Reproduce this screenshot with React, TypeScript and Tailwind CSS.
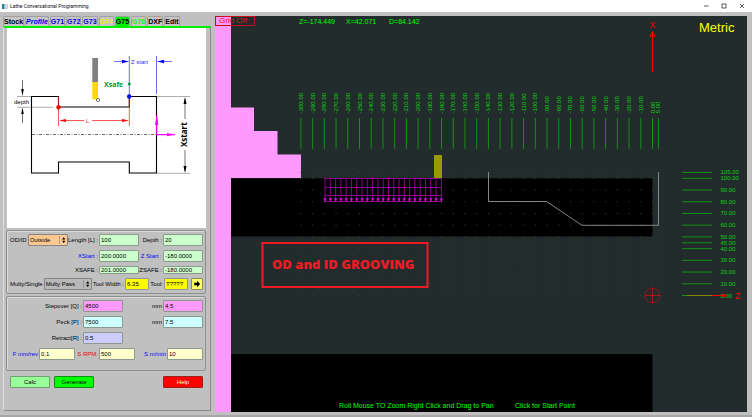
import React from 'react';
import { clsx } from 'clsx';

const TABS = [
  { name: 'Stock', color: 'text-black' },
  { name: 'Profile', color: 'text-[#0000f0] italic' },
  { name: 'G71', color: 'text-[#0000f0]' },
  { name: 'G72', color: 'text-[#0000f0]' },
  { name: 'G73', color: 'text-[#0000f0]' },
  { name: 'G74', color: 'text-[#f5f500]' },
  { name: 'G75', color: 'text-black' },
  { name: 'G76', color: 'text-[#20f020]' },
  { name: 'DXF', color: 'text-black' },
  { name: 'Edit', color: 'text-black' },
];

// --- PLOT SCALE ---
const ORIGIN_Z = 437.5;
const ORIGIN_X = 279.5;
const SCALE = 1.172;
const pz = (z: number) => ORIGIN_Z + z * SCALE;
const px = (x: number) => ORIGIN_X - x * SCALE;

const Z_TICKS = [...Array.from({ length: 31 }, (_, i) => -300 + i * 10), 5];
const X_TICKS = [105, 100, 90, 80, 70, 60, 50, 45, 40, 30, 20, 10, 0];
const PASSES = Array.from({ length: 23 }, (_, i) => 110 + i * 5.29);

interface FieldProps {
  id: string;
  label: string;
  value: string;
  color: string;
  width?: string;
  labelColor?: string;
  thin?: boolean;
}

const Field: React.FC<FieldProps> = ({ id, label, value, color, width = 'w-10', labelColor = 'text-black', thin }) => (
  <div className="flex items-center justify-end gap-px">
    <label htmlFor={id} className={clsx('whitespace-nowrap', labelColor)}>{label}</label>
    <input
      id={id}
      defaultValue={value}
      className={clsx('rounded-[1px] border border-[#8c998c] pl-px text-black outline-none', width, color, thin ? 'h-2' : 'h-3')}
    />
  </div>
);

interface PickerProps {
  id: string;
  label: string;
  options: string[];
  color: string;
  width: string;
}

const Picker: React.FC<PickerProps> = ({ id, label, options, color, width }) => (
  <div className="flex items-center gap-px">
    <label htmlFor={id} className="whitespace-nowrap">{label}</label>
    <div className={clsx('relative h-3', width)}>
      <select id={id} className={clsx('block h-3 w-full appearance-none rounded-[1px] border border-[#858585] pl-px outline-none', color)}>
        {options.map(o => <option key={o}>{o}</option>)}
      </select>
      <svg viewBox="0 0 9 12" className="pointer-events-none absolute top-0 right-0 h-3 w-[9px]">
        <path d="M0.5 2V10" stroke="#888" strokeWidth="0.7" />
        <path d="M3 5.4L4.7 3.2L6.4 5.4ZM3 6.8L4.7 9L6.4 6.8Z" fill="#000" />
      </svg>
    </div>
  </div>
);

const Frame: React.FC<{ className?: string; children: React.ReactNode }> = ({ className, children }) => (
  <div className={clsx('mr-1 ml-[2px] flex flex-col gap-1 rounded-[2px] border border-[#8e8e8e] pt-[3px] pr-[2px] pl-[3px] shadow-[inset_1px_1px_0_#dadada]', className)}>
    {children}
  </div>
);

const PartDiagram = () => (
  <svg viewBox="7 28 199 200" className="mr-1 ml-[3px] block bg-white font-['Liberation_Sans',Arial,sans-serif] text-[6px]">
    {/* dimension lines */}
    <g stroke="#999" strokeWidth="0.8">
      <path d="M17 96.5H31M17 107.3H53M157 96.5H190M157 173.3H190" />
    </g>
    <g stroke="#333" strokeWidth="0.7">
      <path d="M22.5 80V92M22.5 111V123M185 99V119M185 150V171" />
    </g>
    <path d="M22.5 96L21.2 89H23.8ZM22.5 107.5L21.2 114H23.8ZM185 97L183.5 104H186.5ZM185 173L183.5 166H186.5Z" />
    <path d="M32 134.5H156" stroke="#444" strokeWidth="0.8" strokeDasharray="3 1.5 1 1.5" />

    {/* workpiece */}
    <path d="M31.5 96.5H58.5V107H129.3V96.5H156.5V173H129.3V162H58.5V173H31.5Z" fill="none" stroke="#000" strokeWidth="1.1" />

    {/* length */}
    <g stroke="#ff1010" strokeWidth="0.7" fill="none">
      <path d="M58.5 97V126M129.3 97V126M62 120.5H84M92 120.5H126" />
    </g>
    <path d="M59 120.5L66 119V122ZM129 120.5L122 119V122Z" fill="#ff0000" />
    <text x="86" y="122.6" fill="#ff2020">L</text>

    {/* tool */}
    <rect x="92.3" y="58" width="5.7" height="24" fill="#808080" />
    <path d="M92.3 82H98V98L96 99.5H92.3Z" fill="#ffd800" />
    <circle cx="98" cy="100" r="1.6" fill="#fff" stroke="#333" strokeWidth="0.7" />

    {/* z start */}
    <path d="M129.3 56V96M156.5 56V94M114 61.5H125M160 61.5H172" stroke="#3030ff" strokeWidth="0.7" />
    <path d="M129 61.5L122 59.8V63.2ZM157 61.5L164 59.8V63.2Z" fill="#0000ff" />
    <text x="131" y="63.8" fill="#3030ff">Z start</text>
    <text x="104" y="87" fill="#009a30" className="font-['Open_Sans',sans-serif] text-[7px] font-bold">Xsafe</text>
    <path d="M127.6 84L129.3 82L131 84L129.3 86Z" fill="#009a30" />
    <circle cx="129.2" cy="96.5" r="2.2" fill="#0000ff" />
    <circle cx="58.5" cy="107.2" r="2.2" fill="#ff0000" />

    {/* axes */}
    <path d="M156.7 134.6V116M156.7 134.6H175" stroke="#ff00ff" strokeWidth="1.2" />
    <path d="M156.7 115L155 125H158.4ZM175.5 134.6L167 133V136.2Z" fill="#ff00ff" />

    <text x="14" y="103.5">depth</text>
    <text transform="translate(187 147) rotate(-90)" className="font-['Open_Sans',sans-serif] text-[8px] font-bold">Xstart</text>
  </svg>
);

const ToolpathPlot = () => (
  <svg viewBox="0 0 532 396" className="block w-full bg-[#222c2c] font-['Liberation_Sans',Arial,sans-serif]">
    {/* chuck and stock */}
    <path d="M0 0H16V91.5H39V115H62.5V138.5H86V162.3H16V396H0Z" fill="#ff99ff" />
    <path d="M16 162.3H437.5V220.5H16ZM16 338H437.5V396H16Z" fill="#000" />

    {/* grid */}
    <g fill="#1a5a1a">
      {X_TICKS.map(x => Z_TICKS.map(z => (
        <rect key={`${x}:${z}`} x={pz(z) - 0.5} y={px(x) - 0.5} width="1" height="1" />
      )))}
    </g>
    <g stroke="#149214" strokeWidth="1">
      {Z_TICKS.map(z => <path key={z} d={`M${pz(z)} 102V132.7`} />)}
      {X_TICKS.map(x => <path key={x} d={`M467 ${px(x)}H497`} />)}
    </g>
    <g fill="#10d010" className="text-[6px]">
      {Z_TICKS.map(z => (
        <text key={z} transform={`translate(${pz(z) + 2} 97.3) rotate(-90)`}>{z.toFixed(2)}</text>
      ))}
      {X_TICKS.map(x => <text key={x} x="505.5" y={px(x) + 2}>{x.toFixed(2)}</text>)}
    </g>

    {/* tool and groove passes */}
    <rect x="219" y="139" width="8" height="23.3" fill="#999900" />
    <g stroke="#980098" strokeWidth="0.9" fill="none">
      <path d="M109.5 162.5H227M109.5 171.5H227M109.5 179.5H227M109.5 185.5H227" />
      {PASSES.map(x => <path key={x} d={`M${x} 162V186`} />)}
    </g>
    <g fill="#e000e0">
      {PASSES.map(x => <path key={x} d={`M${x} 186L${x - 1.6} 182.3H${x + 1.6}Z`} />)}
    </g>

    {/* profile */}
    <path d="M273.5 156V185.5H331.5L367 209.3H443.5V156" fill="none" stroke="#858585" strokeWidth="1" />

    {/* axes */}
    <g stroke="#ff0000" fill="none">
      <path d="M437.5 56V16M435 21L437.5 15.5L440 21" />
      <path d="M472 279.5H497" stroke="#858500" />
      <path d="M497 279.5H511" />
      <circle cx="437.5" cy="279.5" r="7.5" stroke="#b01010" strokeWidth="0.8" />
      <path d="M430 279.5H445M437.5 272V287" stroke="#d01010" strokeWidth="0.8" />
    </g>
    <path d="M512.5 279.5L507.5 277.5V281.5Z" fill="#ff0000" />
    <g fill="#f00000" className="text-[9px]">
      <text x="434.5" y="11.5">X</text>
      <text x="520" y="282.8">Z</text>
    </g>

    <g fill="#00ff00" className="text-[7px]">
      <text x="84" y="7.5">Z=-174.449</text>
      <text x="131" y="7.5">X=42.071</text>
      <text x="174" y="7.5">D=84.142</text>
      <text x="124" y="391.5">Roll Mouse TO Zoom Right Click and Drag to Pan</text>
      <text x="300" y="391.5">Click for Start Point</text>
    </g>
    <text x="484" y="16" fill="#ffff00" className="text-[13px]">Metric</text>

    <rect x="47.5" y="227" width="165" height="44" fill="none" stroke="#ed1c24" strokeWidth="2" />
    <text x="57" y="253" fill="#ed1c24" className="font-['Open_Sans',sans-serif] text-[13px] font-extrabold">OD and ID GROOVING</text>
  </svg>
);

export default function App() {
  return (
    <div className="flex min-h-screen flex-col bg-[#c0c0c0] font-['Liberation_Sans',Arial,sans-serif] text-[6px] leading-[8px] text-black">
      <header className="flex h-3 items-center bg-white pr-[6px] pl-[2px]">
        <svg viewBox="0 0 6 5" className="mr-[2px] h-[5px] w-[6px]">
          <path d="M0 0H2.5V5H0Z" fill="#2b7f92" />
          <path d="M3 0.5H5.5V4.5H3Z" fill="#dce8f0" stroke="#9ab" strokeWidth="0.5" />
        </svg>
        <h1 className="font-[Roboto,sans-serif] text-[5px] text-[#111]">Lathe Conversational Programming</h1>
        <div className="ml-auto flex gap-[10px]">
          <button aria-label="Minimize" className="h-2 w-2">
            <svg viewBox="0 0 8 8"><path d="M2 4H6.5" stroke="#333" strokeWidth="0.8" /></svg>
          </button>
          <button aria-label="Maximize" className="h-2 w-2">
            <svg viewBox="0 0 8 8"><path d="M2 2H6V6H2Z" fill="none" stroke="#333" strokeWidth="0.8" /></svg>
          </button>
          <button aria-label="Close" className="h-2 w-2">
            <svg viewBox="0 0 8 8"><path d="M2 2L6 6M6 2L2 6" stroke="#333" strokeWidth="0.8" /></svg>
          </button>
        </div>
      </header>

      <main className="flex flex-1 items-stretch gap-1 pt-1 pr-[5px] pb-[3px] pl-[3px]">
        <aside className="flex w-52 shrink-0 flex-col">
          <nav className="flex h-[10px] gap-px">
            {TABS.map(tab => (
              <button
                key={tab.name}
                className={clsx(
                  'rounded-t-[2px] border-t border-r border-l border-[#a0a0a0] text-[7px] font-bold',
                  tab.color,
                  tab.name === 'G75' ? 'bg-[#00ee00]' : 'bg-[#c6c6c6]',
                )}
              >
                {tab.name}
              </button>
            ))}
          </nav>

          <div className="mb-px flex flex-1 flex-col border-t-2 border-r border-b border-l border-t-[#00f000] border-r-[#8a8a8a] border-b-[#8a8a8a] border-l-[#dedede]">
            <PartDiagram />

            <Frame className="mt-[2px] pb-[3px]">
              <div className="grid grid-cols-[1fr_64px]">
                <div className="flex justify-between">
                  <Picker id="side" label="OD/ID" options={['Outside', 'Inside']} color="bg-[#ffc890]" width="w-10" />
                  <Field id="length" label="Length [L] :" value="100" color="bg-[#ccffcc]" />
                </div>
                <Field id="depth" label="Depth :" value="20" color="bg-[#ccffcc]" />
              </div>
              <div className="grid grid-cols-[1fr_64px]">
                <Field id="xstart" label="XStart :" value="200.0000" color="bg-[#ccffcc]" labelColor="text-[#0000f0]" />
                <Field id="zstart" label="Z Start :" value="-180.0000" color="bg-[#ccffcc]" labelColor="text-[#0000f0]" />
              </div>
              <div className="grid grid-cols-[1fr_64px]">
                <Field id="xsafe" label="XSAFE :" value="201.0000" color="bg-[#ccffcc]" thin />
                <Field id="zsafe" label="ZSAFE :" value="-180.0000" color="bg-[#ccffcc]" thin />
              </div>
              <div className="flex gap-px">
                <Picker id="pass" label="Multy/Single" options={['Multy Pass', 'Single Pass']} color="bg-[#b8b8b8]" width="w-12" />
                <Field id="toolwidth" label="Tool Width :" value="6.35" color="bg-[#ffff00]" width="w-6" />
                <div className="ml-auto flex gap-[3px]">
                  <Field id="tool" label="Tool:" value="T????" color="bg-[#ffff00]" width="w-6" />
                  <button aria-label="Pick tool" className="h-3 w-3 rounded-[1px] border border-[#8c8c60] bg-[#ffff66]">
                    <svg viewBox="0 0 10 10"><path d="M2.2 3.7H5V1.8L8.2 5L5 8.2V6.3H2.2Z" /></svg>
                  </button>
                </div>
              </div>
            </Frame>

            <Frame className="mt-[2px] pb-[10px]">
              <div className="grid grid-cols-[113px_1fr]">
                <Field id="stepover" label="Stepover [Q] :" value="4500" color="bg-[#ff99ff]" />
                <Field id="stepover-mm" label="mm" value="4.5" color="bg-[#ff99ff]" />
              </div>
              <div className="grid grid-cols-[113px_1fr]">
                <Field id="peck" label="Peck [P] :" value="7500" color="bg-[#ccffff]" />
                <Field id="peck-mm" label="mm" value="7.5" color="bg-[#ccffff]" />
              </div>
              <div className="grid grid-cols-[113px_1fr]">
                <Field id="retract" label="Retract[R] :" value="0.5" color="bg-[#ccccff]" />
              </div>
              <div className="grid grid-cols-[65px_60px_1fr]">
                <Field id="feed" label="F mm/rev" value="0.1" color="bg-[#ffffcc]" width="w-9" labelColor="text-[#0000f0]" />
                <Field id="rpm" label="S RPM:" value="500" color="bg-[#ffffcc]" width="w-9" labelColor="text-[#f00000]" />
                <Field id="surface" label="S m/min" value="10" color="bg-[#ffffcc]" width="w-9" labelColor="text-[#0000f0]" />
              </div>
            </Frame>

            <div className="mt-[5px] flex gap-1 pr-[7px] pl-[6px]">
              <button className="h-3 w-10 rounded-[1px] border border-[#70a070] bg-[#99ff99]">Calc</button>
              <button className="h-3 w-10 rounded-[1px] border border-[#109010] bg-[#00ff00]">Generate</button>
              <button className="ml-auto h-3 w-10 rounded-[1px] border border-[#a02020] bg-[#ff0000] text-white">Help</button>
            </div>
          </div>
        </aside>

        <section className="relative min-w-0 flex-1 bg-[#222c2c]">
          <ToolpathPlot />
          <button className="absolute top-0 left-0 h-[10px] w-10 border border-[#c01020] pl-[3px] text-left text-[8px] text-[#e01020]">Grid Off</button>
        </section>
      </main>

      <footer className="h-[2px] bg-[#a6a6a6]" />
    </div>
  );
}
